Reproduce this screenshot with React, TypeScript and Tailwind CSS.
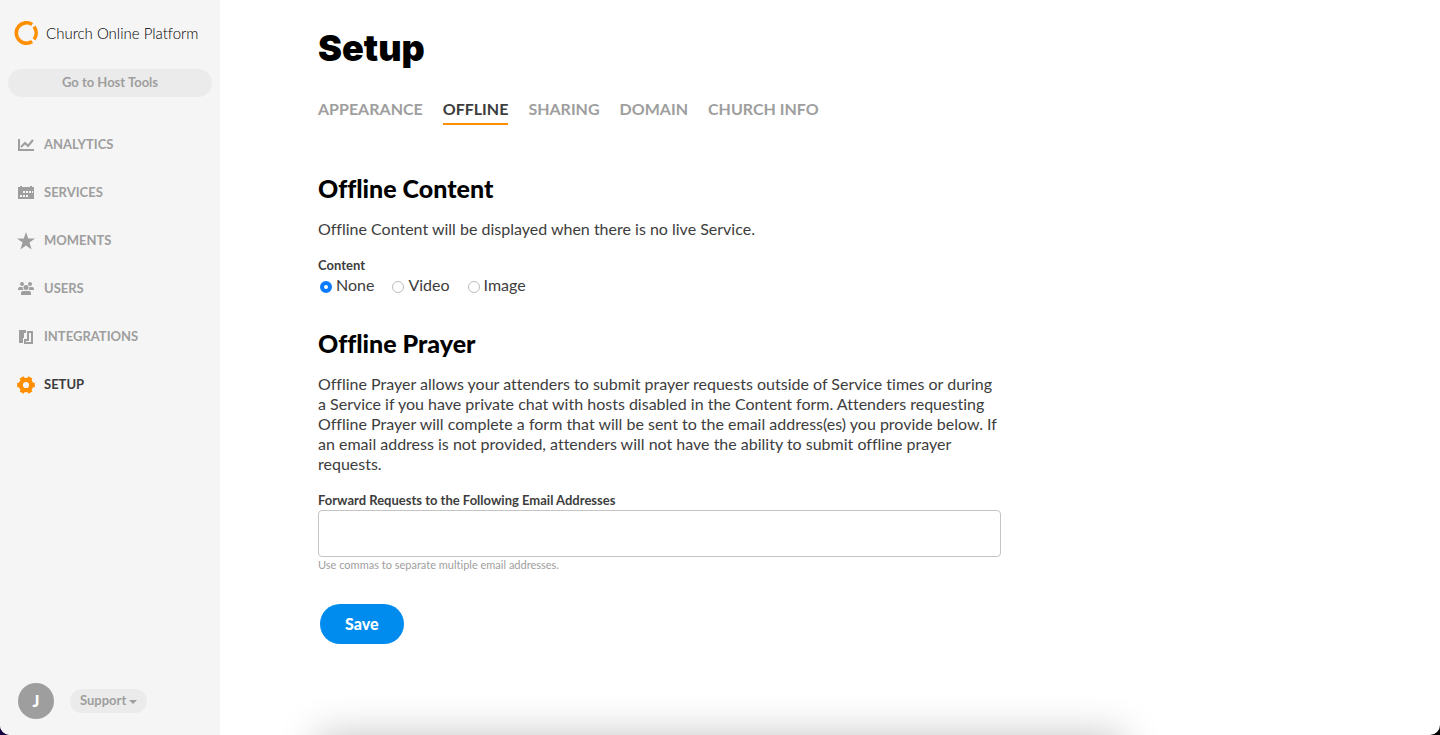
import { useState, type ReactNode } from "react";

const navItems: { label: string; icon: ReactNode }[] = [
  {
    label: "Analytics",
    icon: (
      <>
        <path d="M1 3h2v10h14v2H1z" />
        <path d="m4 11 4-4 3 3 5-6" fill="none" stroke="currentColor" strokeWidth="2" />
      </>
    ),
  },
  {
    label: "Services",
    icon: (
      <path
        fillRule="evenodd"
        d="M1 3h2V2h2v1h8V2h2v1h2v12H1zM6 7v2h2V7zm3 0v2h2V7zm3 0v2h2V7zm3 0v2h1V7zM3 11v2h2v-2zm3 0v2h2v-2zm3 0v2h2v-2z"
      />
    ),
  },
  {
    label: "Moments",
    icon: <path d="m9 0 2.200 6.400H18l-5.500 4.200 2.100 6.900L9 13.400l-5.600 4.100 2.100-6.900L0 6.400h6.800z" />,
  },
  {
    label: "Users",
    icon: (
      <>
        <circle cx="5" cy="4" r="2" />
        <circle cx="13" cy="4" r="2" />
        <circle cx="9" cy="7.500" r="2.500" />
        <path d="M1 10V9q0-2 2-2h2.500q0 2 1 3zM17 10V9q0-2-2-2h-2.500q0 2-1 3zM4 15v-2q0-2 2-2h6q2 0 2 2v2z" />
      </>
    ),
  },
  {
    label: "Integrations",
    icon: (
      <>
        <path d="M2 2h7v3H7v5H6v5H2z" />
        <path d="M11 4h4v11H8v-3h3z" fill="none" stroke="currentColor" strokeWidth="2" />
      </>
    ),
  },
  {
    label: "Setup",
    icon: (
      <>
        <circle cx="9" cy="9" r="5.200" fill="none" stroke="currentColor" strokeWidth="4.200" />
        <path
          d="M.2 9h3M14.800 9h3M4.600 1.400l1.500 2.600M11.900 14l1.500 2.600M13.400 1.400 11.900 4M6.100 14l-1.500 2.600"
          stroke="currentColor"
          strokeWidth="4.600"
        />
      </>
    ),
  },
];

const tabs = ["Appearance", "Offline", "Sharing", "Domain", "Church Info"];
const contentTypes = ["None", "Video", "Image"];

function Sidebar() {
  return (
    <aside className="flex w-[220px] shrink-0 flex-col bg-[#f5f5f5] pb-4">
      <a href="#" className="flex h-[66px] items-center gap-2 pl-[14px] text-black">
        <svg viewBox="0 0 24 24" className="size-6" fill="none" stroke="#ff8f00" strokeWidth="3.600">
          <path d="M18.100 3.500A10.200 10.200 0 1 0 18.100 20.500" />
          <path d="M20 5.700A10.200 10.200 0 0 1 20 18.300" />
        </svg>
        <span className="text-[15px] font-light">Church Online Platform</span>
      </a>
      <button
        type="button"
        className="mx-2 mt-[3px] h-7 rounded-full bg-[#ebebeb] text-[13px] font-bold text-[#9e9e9e]"
      >
        Go to Host Tools
      </button>

      <nav className="mt-6">
        {navItems.map((item) => (
          <a
            key={item.label}
            href="#"
            className={`flex h-12 items-center gap-[9px] pl-[17px] text-[13px] font-bold uppercase ${
              item.label === "Setup" ? "text-[#3d3d3d]" : "text-[#9e9e9e]"
            }`}
          >
            <svg
              viewBox="0 0 18 18"
              fill="currentColor"
              className={`size-[18px] ${item.label === "Setup" ? "text-[#ff8f00]" : ""}`}
            >
              {item.icon}
            </svg>
            {item.label}
          </a>
        ))}
      </nav>

      <div className="mt-auto flex items-center gap-4 pl-[18px]">
        <button type="button" className="size-9 rounded-full bg-[#9e9e9e] text-base font-black text-white">
          J
        </button>
        <button
          type="button"
          className="flex h-6 items-center gap-[3px] rounded-full bg-[#ebebeb] px-[10px] text-[13px] font-bold text-[#9e9e9e]"
        >
          Support
          <svg viewBox="0 0 8 4" className="mt-[2px] h-1 w-2" fill="currentColor">
            <path d="M0 0h8L4 4z" />
          </svg>
        </button>
      </div>
    </aside>
  );
}

export default function App() {
  const [content, setContent] = useState("None");
  const [emails, setEmails] = useState("");

  return (
    <div className="bg-linear-to-r from-[#14003c] to-black font-['Lato','Liberation_Sans',sans-serif] text-[#3d3d3d] [font-variant-ligatures:none]">
      <div className="relative flex min-h-screen overflow-hidden rounded-b-[10px] bg-white">
        <Sidebar />

        <main className="min-w-0 flex-1 pt-6 pr-8 pb-16 pl-[98px]">
          <div className="max-w-[683px]">
            <h1 className="font-['Inter','Lato',sans-serif] text-4xl leading-[48px] font-black text-black">Setup</h1>

            <nav className="mt-[25px] flex gap-5 text-base leading-6 font-bold whitespace-nowrap uppercase">
              {tabs.map((tab) => (
                <a
                  key={tab}
                  href="#"
                  className={
                    tab === "Offline"
                      ? "border-b-2 border-[#ff8f00] pb-[2px] text-[#3d3d3d]"
                      : "border-b-2 border-transparent pb-[2px] text-[#9e9e9e]"
                  }
                >
                  {tab}
                </a>
              ))}
            </nav>

            <form onSubmit={(e) => e.preventDefault()}>
              <h2 className="mt-[47px] text-[25px] leading-8 font-black text-black">Offline Content</h2>
              <p className="mt-[15px] text-base leading-5">
                Offline Content will be displayed when there is no live Service.
              </p>

              <fieldset className="mt-4">
                <legend className="text-[13px] leading-5 font-bold">Content</legend>
                <div className="flex gap-[18px] pl-[2px]">
                  {contentTypes.map((type) => (
                    <label key={type} className="flex items-center gap-1 text-base leading-5">
                      <input
                        type="radio"
                        name="content"
                        value={type}
                        checked={content === type}
                        onChange={() => setContent(type)}
                        className="mt-[3px] size-3 appearance-none rounded-full border border-[#bdbdbd] bg-white checked:border-4 checked:border-[#0a7aff]"
                      />
                      {type}
                    </label>
                  ))}
                </div>
              </fieldset>

              <h2 className="mt-8 text-[25px] leading-8 font-black text-black">Offline Prayer</h2>
              <p className="mt-[15px] text-base leading-5">
                Offline Prayer allows your attenders to submit prayer requests outside of Service times or during a
                Service if you have private chat with hosts disabled in the Content form. Attenders requesting Offline
                Prayer will complete a form that will be sent to the email address(es) you provide below. If an email
                address is not provided, attenders will not have the ability to submit offline prayer requests.
              </p>

              <label htmlFor="emails" className="mt-4 block text-[13px] leading-5 font-bold">
                Forward Requests to the Following Email Addresses
              </label>
              <input
                id="emails"
                type="text"
                value={emails}
                onChange={(e) => setEmails(e.target.value)}
                aria-describedby="emails-help"
                className="block h-[47px] w-full rounded border border-[#c4c4c4] px-3 text-base"
              />
              <p id="emails-help" className="text-[11px] leading-4 text-[#9e9e9e]">
                Use commas to separate multiple email addresses.
              </p>

              <button
                type="submit"
                className="mt-[31px] ml-[2px] h-10 rounded-full bg-[#008cee] px-[25px] text-base font-black text-white"
              >
                Save
              </button>
            </form>
          </div>
        </main>

        <div className="pointer-events-none absolute -bottom-20 left-[22%] h-20 w-[56%] shadow-[0_0_40px_rgba(0,0,0,0.23)]" />
      </div>
    </div>
  );
}
